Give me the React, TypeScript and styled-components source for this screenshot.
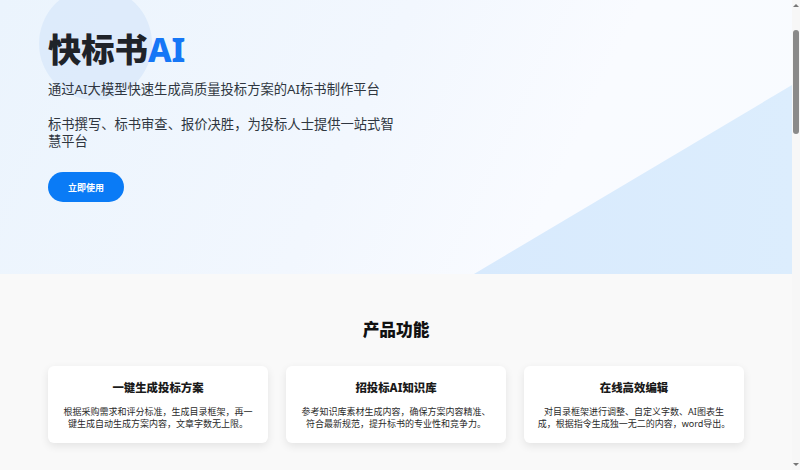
import React from "react";
import styled, { createGlobalStyle } from "styled-components";

const Global = createGlobalStyle`
  html, body { margin: 0; padding: 0; }
  body {
    font-family: "Noto Sans", "Noto Sans CJK SC", sans-serif;
    background: #f9f9f9;
  }
`;

const Page = styled.div`
  width: calc(100vw - 8px);
  min-height: 1990px;
  display: flex;
  flex-direction: column;
`;

const ScrollTrack = styled.div`
  position: fixed;
  top: 0;
  right: 0;
  width: 8px;
  height: 100vh;
  background: #f7f7f7;
`;

const Arrow = styled.div<{ $down?: boolean }>`
  position: absolute;
  left: 1px;
  ${(p) => (p.$down ? "bottom: 4px;" : "top: 4px;")}
  width: 0;
  height: 0;
  border-left: 3px solid transparent;
  border-right: 3px solid transparent;
  ${(p) =>
    p.$down ? "border-top: 3px solid #777;" : "border-bottom: 3px solid #777;"}
`;

const Thumb = styled.div`
  position: absolute;
  top: 30px;
  left: 1px;
  width: 6px;
  height: 104px;
  border-radius: 3px;
  background: #8a8a8a;
`;

const Hero = styled.section`
  position: relative;
  height: 274px;
  box-sizing: border-box;
  padding: 29px 48px 0;
  overflow: hidden;
  background: linear-gradient(115deg, #ebf4fd 0%, #f2f7fe 45%, #f9fbff 70%, #f8fbff 100%);
`;

const Circle = styled.div`
  position: absolute;
  left: 39px;
  top: -13px;
  width: 113px;
  height: 113px;
  border-radius: 50%;
  background: #dbeafb;
  opacity: 0.9;
`;

const Triangle = styled.div`
  position: absolute;
  right: 0;
  bottom: 0;
  width: 318px;
  height: 189px;
  background: linear-gradient(90deg, #d8eafd, #dcedfd);
  clip-path: polygon(100% 0, 100% 100%, 0 100%);
`;

const HeroContent = styled.div`
  position: relative;
  display: flex;
  flex-direction: column;
  align-items: flex-start;
`;

const Title = styled.h1`
  margin: 0;
  font-size: 33.3px;
  line-height: 40px;
  font-weight: 800;
  color: #1f2329;
`;

const Accent = styled.span`
  color: #1677f6;
`;

const Subtitle = styled.p`
  margin: 12px 0 0;
  font-size: 13.3px;
  line-height: 16px;
  color: #2f3640;
`;

const Lead = styled.p`
  margin: 19px 0 0;
  max-width: 352px;
  font-size: 13.3px;
  line-height: 16.5px;
  color: #2f3640;
`;

const CTA = styled.button`
  margin-top: 23px;
  width: 76px;
  height: 30px;
  border: none;
  border-radius: 15px;
  background: #0a7bf6;
  color: #fff;
  font-family: inherit;
  font-size: 9px;
  font-weight: 700;
  cursor: pointer;
`;

const Features = styled.section`
  flex: 1;
  padding: 46px 48px 40px;
  background: #f9f9f9;
`;

const SectionTitle = styled.h2`
  margin: 0;
  text-align: center;
  font-size: 16.7px;
  line-height: 20px;
  font-weight: 800;
  color: #111;
`;

const Grid = styled.div`
  margin-top: 26px;
  display: grid;
  grid-template-columns: repeat(3, 1fr);
  gap: 18px;
`;

const Card = styled.div`
  background: #fff;
  border-radius: 6px;
  padding: 15px 12px 14px;
  box-shadow: 0 3px 8px rgba(0, 0, 0, 0.09);
  text-align: center;
`;

const CardTitle = styled.h3`
  margin: 0;
  font-size: 11.4px;
  line-height: 14px;
  font-weight: 800;
  color: #1a1a1a;
`;

const CardText = styled.p`
  margin: 11px 0 0;
  font-size: 9px;
  line-height: 11.5px;
  color: #2a2a2a;
`;

const features = [
  {
    title: "一键生成投标方案",
    text: "根据采购需求和评分标准，生成目录框架，再一键生成自动生成方案内容，文章字数无上限。",
  },
  {
    title: "招投标AI知识库",
    text: "参考知识库素材生成内容，确保方案内容精准、符合最新规范，提升标书的专业性和竞争力。",
  },
  {
    title: "在线高效编辑",
    text: "对目录框架进行调整、自定义字数、AI图表生成，根据指令生成独一无二的内容，word导出。",
  },
];

export default function App() {
  return (
    <>
      <Global />
      <Page>
        <Hero>
          <Circle />
          <Triangle />
          <HeroContent>
            <Title>
              快标书<Accent>AI</Accent>
            </Title>
            <Subtitle>通过AI大模型快速生成高质量投标方案的AI标书制作平台</Subtitle>
            <Lead>标书撰写、标书审查、报价决胜，为投标人士提供一站式智慧平台</Lead>
            <CTA>立即使用</CTA>
          </HeroContent>
        </Hero>
        <Features>
          <SectionTitle>产品功能</SectionTitle>
          <Grid>
            {features.map((f) => (
              <Card key={f.title}>
                <CardTitle>{f.title}</CardTitle>
                <CardText>{f.text}</CardText>
              </Card>
            ))}
          </Grid>
        </Features>
      </Page>
      <ScrollTrack>
        <Arrow />
        <Thumb />
        <Arrow $down />
      </ScrollTrack>
    </>
  );
}
